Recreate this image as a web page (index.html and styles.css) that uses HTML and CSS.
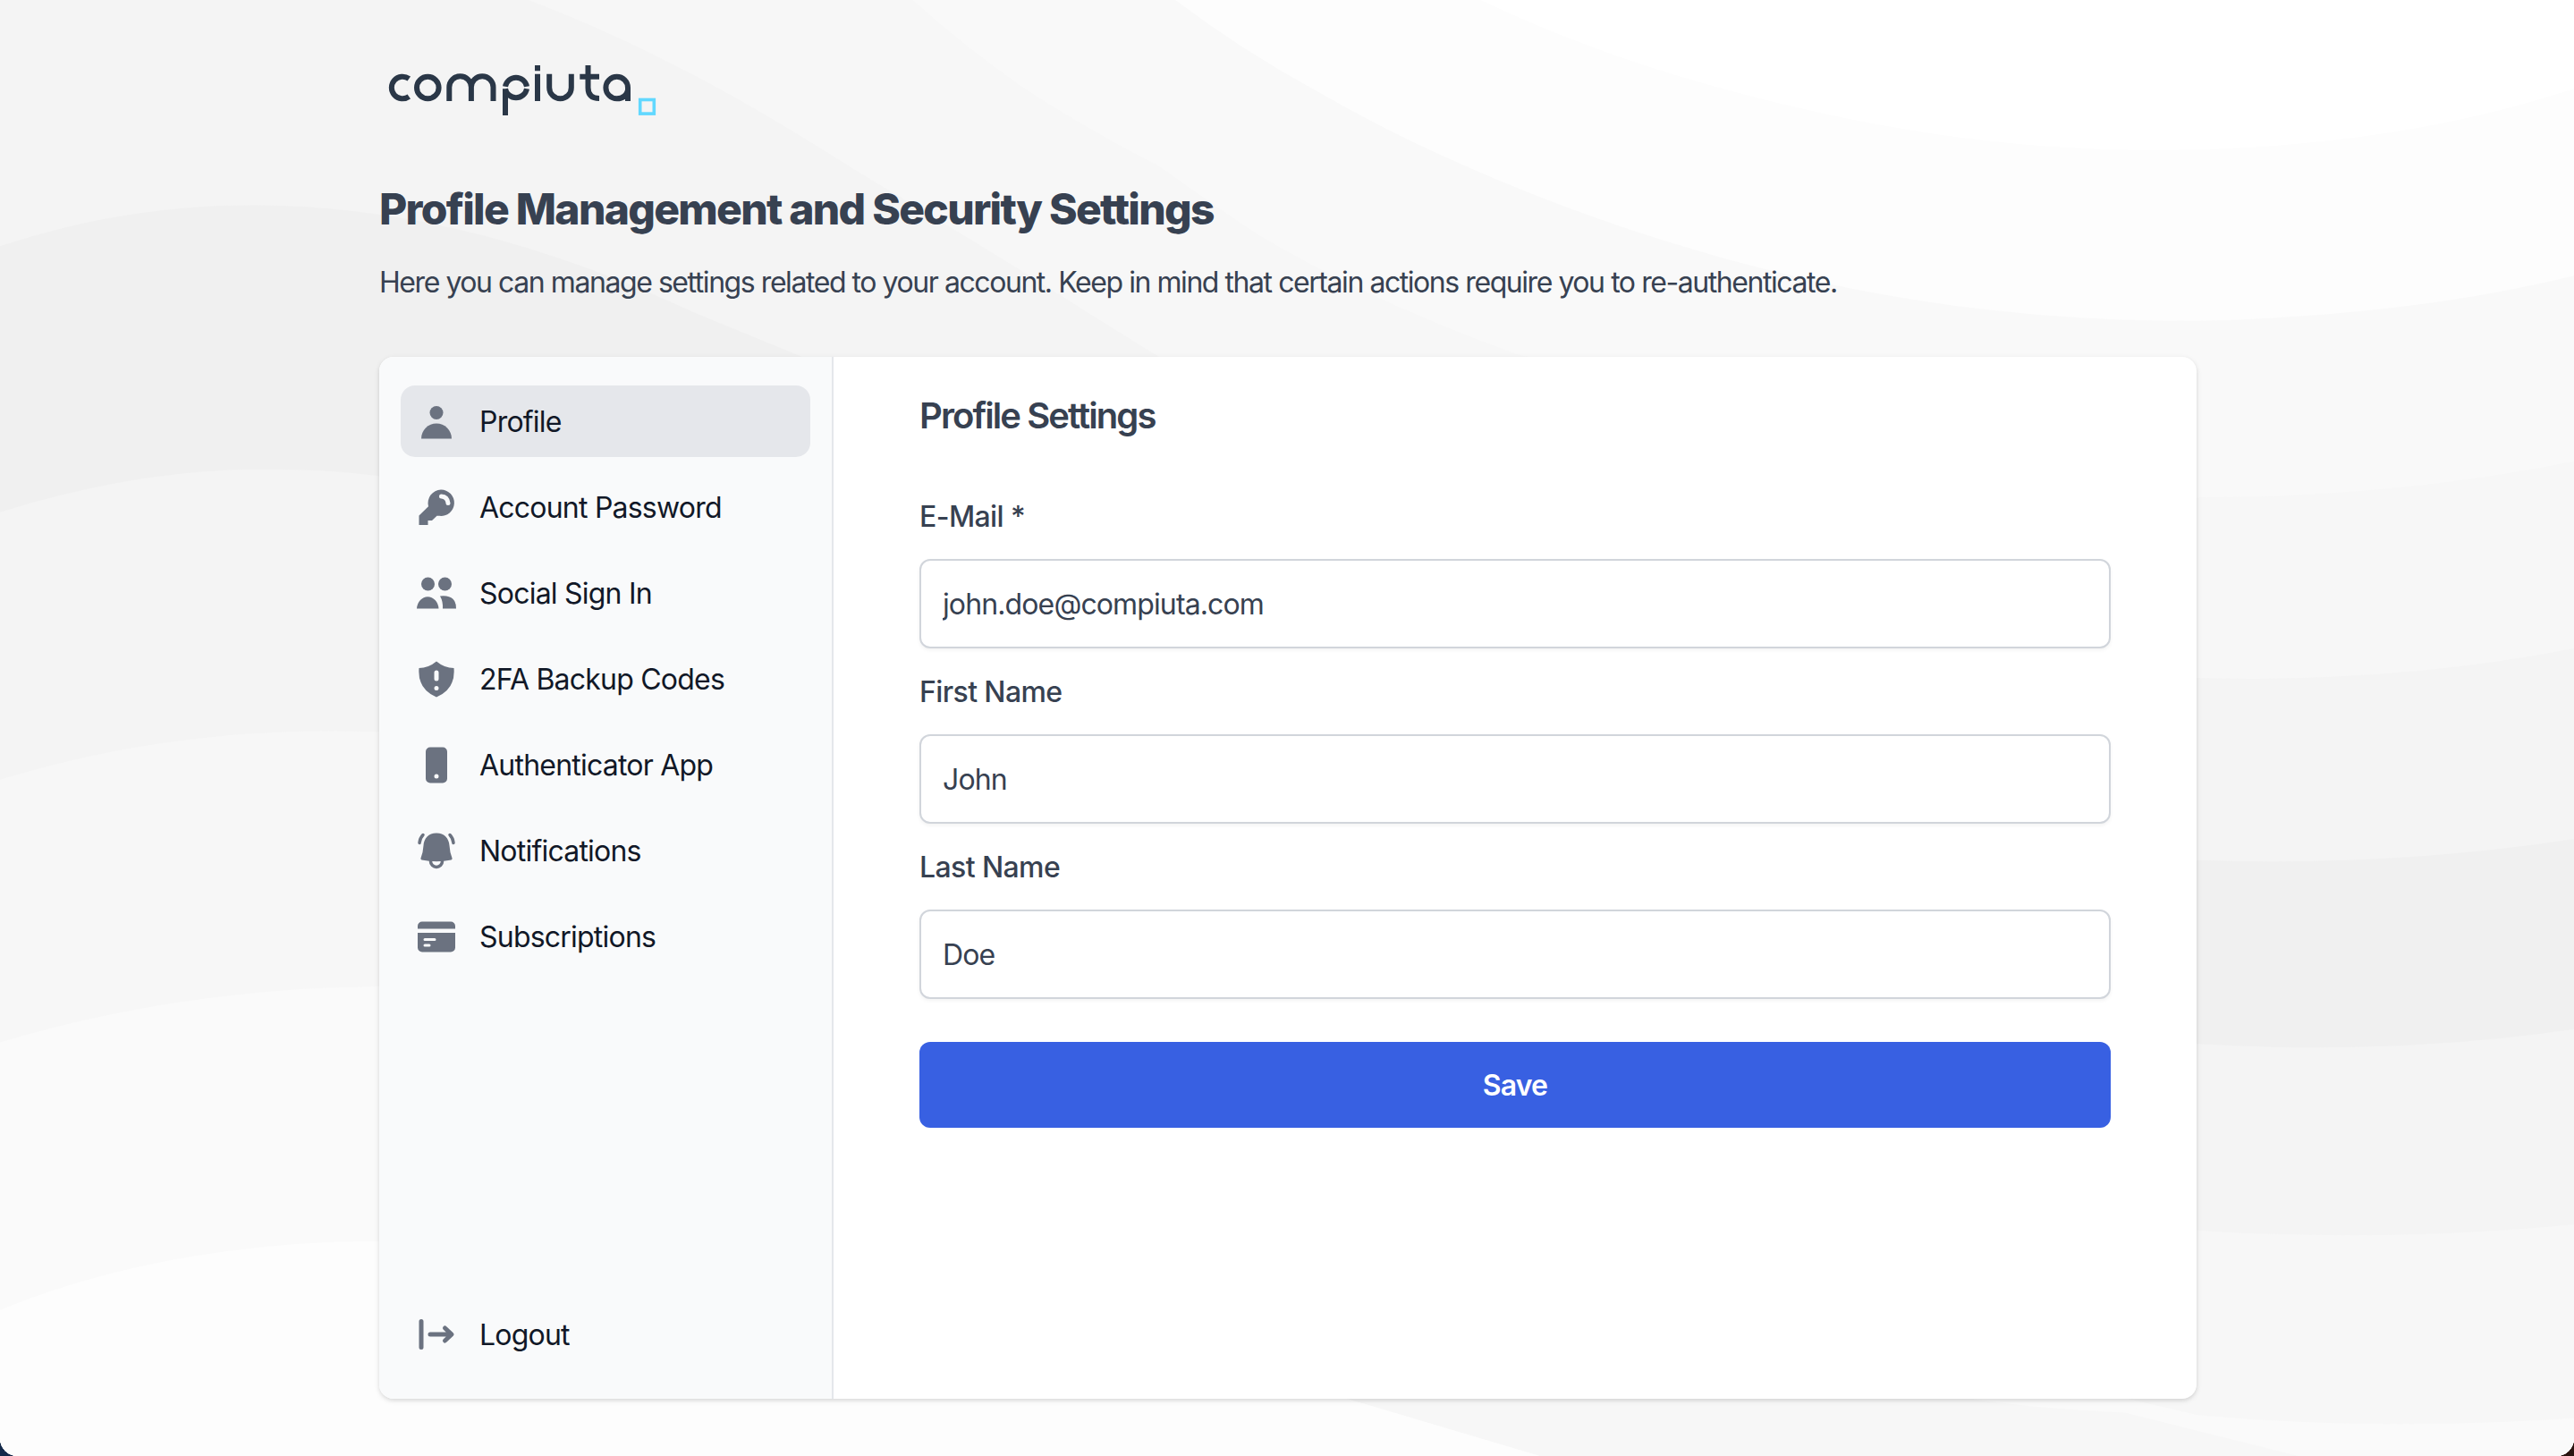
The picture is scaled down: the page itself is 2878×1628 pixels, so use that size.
FILE: index.html
```
<!DOCTYPE html>
<html lang="en">
<head>
    <meta charset="UTF-8">
    <meta name="viewport" content="width=device-width, initial-scale=1.0">
    <title>Profile Management and Security Settings</title>
    <link rel="stylesheet" href="styles.css">
</head>
<body>
    <!-- Background waves -->
    <svg class="waves" viewBox="0 0 1568 887" preserveAspectRatio="none" aria-hidden="true">
        <rect width="1568" height="887" fill="#f4f4f4"/>
        <path fill="#f7f7f7" d="M322 0C400 30 460 65 520 103C580 139 620 163 662 190L707 218L1338 413Q1460 416 1568 395V0Z"/>
        <path fill="#f9f9f9" d="M556 0Q586 27 622 52.500Q662 79 706 101Q735 122 768 144Q840 186 925 216L1338 303Q1460 303 1568 281V0Z"/>
        <path fill="#fdfdfd" d="M716 0Q757 31 803 56Q848 82 897 103Q963 132 1035 153C1140 184 1240 196 1340 195.500Q1470 192 1568 168V0Z"/>
        <path fill="#fff" d="M902 0Q965 30 1035 50C1140 80 1230 92 1320 91.500Q1460 90 1568 54V0Z"/>
        <path fill="#f0f0f0" d="M0 150Q75 125 155 125C250 125 340 152 422 190L490 218L1338 524Q1460 528 1568 511V887H0Z"/>
        <path fill="#f4f4f4" d="M0 312Q90 284 170 286Q200 286 231 290L1338 636Q1460 643 1568 627V887H0Z"/>
        <path fill="#f7f7f7" d="M0 475Q110 441 231 446L1338 749.500Q1450 757 1568 746V887H0Z"/>
        <path fill="#fafafa" d="M0 635Q110 602 231 601L1338 862Q1450 873 1568 864V887H0Z"/>
        <path fill="#f7f7f7" d="M700 820L1338 862Q1250 860 1200 852L820 852L938 887H1568V864Q1450 873 1338 862Z"/>
        <path fill="#fafafa" d="M1260 852Q1400 875 1568 864V887H1400Z"/>
        <path fill="#fdfdfd" d="M0 798Q100 757 231 756L820 852L938 887H0Z"/>
    </svg>

    <div class="page">
        <!-- Logo -->
        <svg class="logo" viewBox="0 0 320 80" role="img" aria-label="compiuta">
            <g fill="none" stroke="#2a3747" stroke-width="6">
                <path d="M33.300 21A12.300 12.300 0 1 0 33.300 41"/>
                <circle cx="54.300" cy="31" r="12.300"/>
                <path d="M78.300 46V30.500a12.300 12.300 0 0 1 24.600 0V46M102.900 30.500a12.300 12.300 0 0 1 24.600 0V46"/>
                <path d="M141 29.700A12.200 12.200 0 0 1 165 29.700"/>
                <path d="M141 62V32.200M141 32.200A12.200 12.200 0 0 0 165 32.200"/>
                <path d="M177 15.700V46M177 6V12.200"/>
                <path d="M190.200 15.700V31a12.300 12.300 0 0 0 24.600 0V15.700"/>
                <path d="M233.500 6V31Q233.500 43 246 43M224.300 18.800H246"/>
                <path d="M278 46V31a12.300 12.300 0 1 0 -12.300 12.300Q276 43 278 34"/>
            </g>
            <rect x="291.700" y="44.500" width="15.600" height="15.600" fill="none" stroke="#61d8ff" stroke-width="3.600"/>
        </svg>

        <h1>Profile Management and Security Settings</h1>
        <p class="intro">Here you can manage settings related to your account. Keep in mind that certain actions require you to re-authenticate.</p>

        <div class="card">
            <nav class="sidebar">
                <a class="nav-item active" href="#">
                    <svg class="icon" viewBox="0 0 48 48"><circle cx="24" cy="13.500" r="7.500"/><path d="M7 42.500a17 17 0 0 1 34 0Z"/></svg>
                    <span>Profile</span>
                </a>
                <a class="nav-item" href="#">
                    <svg class="icon" viewBox="0 0 48 48"><path fill-rule="evenodd" d="M29 3.500a14.700 14.700 0 1 1-1.500 29.300H24.500L19 38H14.500V43H4.500V32.500L15 22.300A15 15 0 0 1 29 3.500Zm.500 5a2.500 2.500 0 0 0 0 5Q34 14 34.500 18.500a2.500 2.500 0 0 0 5 0Q38.500 9 29.500 8.500Z"/></svg>
                    <span>Account Password</span>
                </a>
                <a class="nav-item" href="#">
                    <svg class="icon" viewBox="0 0 48 48"><circle cx="14.500" cy="13" r="7.500"/><circle cx="33.500" cy="13" r="7.500"/><path d="M2 40.500a12.300 14.500 0 0 1 24.500 0ZM28 26.500q18-2 18 14H31q.500-8-3-14Z"/></svg>
                    <span>Social Sign In</span>
                </a>
                <a class="nav-item" href="#">
                    <svg class="icon" viewBox="0 0 48 48"><path fill-rule="evenodd" d="M24 3.500Q33 11 43.500 11Q45.500 34.500 24 43.500Q2.500 34.500 4.500 11Q15 11 24 3.500Zm0 10a2.500 2.500 0 0 0-2.500 2.500v7a2.500 2.500 0 0 0 5 0v-7A2.500 2.500 0 0 0 24 13.500Zm0 17.500a2.500 2.500 0 1 0 0 5a2.500 2.500 0 0 0 0-5Z"/></svg>
                    <span>2FA Backup Codes</span>
                </a>
                <a class="nav-item" href="#">
                    <svg class="icon" viewBox="0 0 48 48"><path fill-rule="evenodd" d="M17 3.500H31a5 5 0 0 1 5 5V38.500a5 5 0 0 1-5 5H17a5 5 0 0 1-5-5V8.500a5 5 0 0 1 5-5Zm7 30a2.500 2.500 0 1 0 0 5a2.500 2.500 0 0 0 0-5Z"/></svg>
                    <span>Authenticator App</span>
                </a>
                <a class="nav-item" href="#">
                    <svg class="icon" viewBox="0 0 48 48"><path d="M24 3.500C33 3.500 38 9.500 38.500 17.500Q39 25.500 41.500 31.500Q42 33 40.500 33.500Q24 37 7.500 33.500Q6 33 6.500 31.500Q9 25.500 9.500 17.500C10 9.500 15 3.500 24 3.500Z"/><path class="line" d="M17.500 35a6.500 6.500 0 0 0 13 0M9 5.500Q5.500 9 5 14.500M39 5.500Q42.500 9 43 14.500"/></svg>
                    <span>Notifications</span>
                </a>
                <a class="nav-item" href="#">
                    <svg class="icon" viewBox="0 0 48 48"><path d="M8 6.500H40a5 5 0 0 1 5 5V14.500H3V11.500a5 5 0 0 1 5-5Z"/><path fill-rule="evenodd" d="M3 19H45V35.500a5 5 0 0 1-5 5H8a5 5 0 0 1-5-5ZM11 25a1.500 1.500 0 0 0 0 3H22a1.500 1.500 0 0 0 0-3Zm0 6.500a1.500 1.500 0 0 0 0 3H16a1.500 1.500 0 0 0 0-3Z"/></svg>
                    <span>Subscriptions</span>
                </a>
                <a class="nav-item logout" href="#">
                    <svg class="icon" viewBox="0 0 48 48"><path class="bold-line" d="M7 8.500V37.500M17 23H40M33.500 16L41 23L33.500 30"/></svg>
                    <span>Logout</span>
                </a>
            </nav>

            <main class="content">
                <h2>Profile Settings</h2>
                <form class="form">
                    <label for="email">E-Mail *</label>
                    <input type="text" id="email" value="john.doe@compiuta.com">
                    <label for="firstName">First Name</label>
                    <input type="text" id="firstName" value="John">
                    <label for="lastName">Last Name</label>
                    <input type="text" id="lastName" value="Doe">
                    <button type="button" class="save-btn">Save</button>
                </form>
            </main>
        </div>
    </div>
</body>
</html>
```

FILE: styles.css
```
* {
    margin: 0;
    padding: 0;
    box-sizing: border-box;
}
body {
    font-family: Inter, "Liberation Sans", sans-serif;
    font-size: 32px;
    line-height: 48px;
    color: #374151;
    background: linear-gradient(90deg, #14294a 50%, #2a1410 50%);
    height: 1628px;
    overflow: hidden;
}
.waves {
    position: absolute;
    top: 0;
    left: 0;
    width: 100%;
    height: 100%;
    border-radius: 0 0 20px 20px;
    z-index: -1;
}
.page {
    width: 2032px;
    margin: 0 auto 0 424px;
    padding-top: 67px;
}
.logo {
    display: block;
    width: 320px;
    height: 80px;
}
h1 {
    margin-top: 55px;
    font-size: 48px;
    line-height: 64px;
    font-weight: 800;
    letter-spacing: -1.720px;
}
.intro {
    margin-top: 26px;
    letter-spacing: -1.440px;
}
.card {
    display: flex;
    height: 1165px;
    margin-top: 59px;
    background: #fff;
    border-radius: 16px;
    overflow: hidden;
    box-shadow: 0 2px 6px rgba(0, 0, 0, 0.1), 0 2px 4px rgba(0, 0, 0, 0.06);
}
.sidebar {
    display: flex;
    flex-direction: column;
    gap: 16px;
    width: 508px;
    padding: 32px 24px;
    background: #f9fafb;
    border-right: 2px solid #e5e7eb;
}
.nav-item {
    display: flex;
    align-items: center;
    gap: 24px;
    height: 80px;
    padding: 2px 16px 0;
    border-radius: 16px;
    color: #111827;
    letter-spacing: -0.780px;
    text-decoration: none;
}
.active {
    background: #e5e7eb;
}
.logout {
    margin-top: auto;
}
.icon {
    width: 48px;
    height: 48px;
    fill: #6b7280;
}
.line,
.bold-line {
    fill: none;
    stroke: #6b7280;
    stroke-width: 3.500;
    stroke-linecap: round;
    stroke-linejoin: round;
}
.bold-line {
    stroke-width: 5;
}
.content {
    flex: 1;
    padding: 36px 96px;
}
h2 {
    font-size: 40px;
    line-height: 60px;
    font-weight: 600;
    letter-spacing: -1.920px;
}
.form {
    display: flex;
    flex-direction: column;
    margin-top: 59px;
}
.form label {
    margin-bottom: 23px;
    font-weight: 500;
    letter-spacing: -0.600px;
}
.form input {
    height: 100px;
    margin-bottom: 25px;
    padding: 0 24px;
    font: inherit;
    letter-spacing: -0.880px;
    color: #374151;
    background: #fff;
    border: 2px solid #d1d5db;
    border-radius: 12px;
    box-shadow: 0 2px 4px rgba(0, 0, 0, 0.05);
}
.save-btn {
    height: 96px;
    margin-top: 23px;
    padding-top: 1px;
    font: inherit;
    font-weight: 600;
    letter-spacing: -0.850px;
    color: #fff;
    background: #3860e2;
    border: none;
    border-radius: 12px;
}
```
